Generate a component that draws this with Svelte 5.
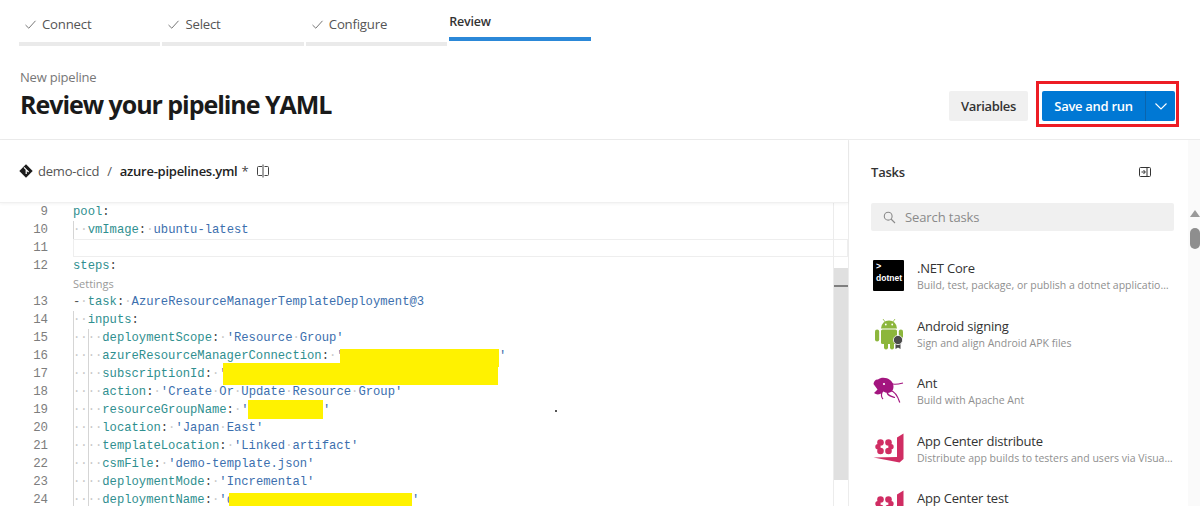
<script>
	const steps = [
		{ label: 'Connect', done: true },
		{ label: 'Select', done: true },
		{ label: 'Configure', done: true },
		{ label: 'Review', done: false }
	];

	// indent = number of visible whitespace dots, k = key, v = value
	const lines = [
		{ n: 9, k: 'pool', colon: ':' },
		{ n: 10, indent: 2, k: 'vmImage', v: 'ubuntu-latest' },
		{ n: 11, current: true },
		{ n: 12, k: 'steps', colon: ':' },
		{ settings: true },
		{ n: 13, dash: true, k: 'task', v: 'AzureResourceManagerTemplateDeployment@3' },
		{ n: 14, indent: 2, k: 'inputs', colon: ':' },
		{ n: 15, indent: 4, k: 'deploymentScope', v: "'Resource Group'" },
		{ n: 16, indent: 4, k: 'azureResourceManagerConnection', v: "'" },
		{ n: 17, indent: 4, k: 'subscriptionId', v: "'" },
		{ n: 18, indent: 4, k: 'action', v: "'Create Or Update Resource Group'" },
		{ n: 19, indent: 4, k: 'resourceGroupName', v: "'" },
		{ n: 20, indent: 4, k: 'location', v: "'Japan East'" },
		{ n: 21, indent: 4, k: 'templateLocation', v: "'Linked artifact'" },
		{ n: 22, indent: 4, k: 'csmFile', v: "'demo-template.json'" },
		{ n: 23, indent: 4, k: 'deploymentMode', v: "'Incremental'" },
		{ n: 24, indent: 4, k: 'deploymentName', v: "'d" }
	];

	const tasks = [
		{ icon: 'dotnet', name: '.NET Core', desc: 'Build, test, package, or publish a dotnet application, or run a custom dotnet command' },
		{ icon: 'android', name: 'Android signing', desc: 'Sign and align Android APK files' },
		{ icon: 'ant', name: 'Ant', desc: 'Build with Apache Ant' },
		{ icon: 'appcenter', name: 'App Center distribute', desc: 'Distribute app builds to testers and users via Visual Studio App Center' },
		{ icon: 'appcenter', name: 'App Center test', desc: 'Test app packages with Visual Studio App Center' }
	];

	const words = (text) => text.split(' ');
</script>

<div class="page">
	<nav class="stepper">
		{#each steps as step}
			<div class="step" class:active={!step.done}>
				<div class="step-label">
					{#if step.done}
						<svg class="check" width="13" height="13" viewBox="0 0 13 13" aria-hidden="true">
							<path d="M1.5 7 L4.8 10.2 L11.5 2.8" fill="none" stroke="#777" stroke-width="1" />
						</svg>
					{/if}
					<span>{step.label}</span>
				</div>
				<div class="step-bar"></div>
			</div>
		{/each}
	</nav>

	<header class="header">
		<div class="titles">
			<div class="crumb">New pipeline</div>
			<h1>Review your pipeline YAML</h1>
		</div>
		<div class="actions">
			<button class="btn-plain">Variables</button>
			<div class="highlight">
				<div class="split">
					<button class="btn-primary">Save and run</button>
					<button class="btn-caret" aria-label="More actions">
						<svg width="14" height="14" viewBox="0 0 14 14" aria-hidden="true">
							<path d="M1.5 4.5 L7 10 L12.5 4.5" fill="none" stroke="#fff" stroke-width="1.1" />
						</svg>
					</button>
				</div>
			</div>
		</div>
	</header>

	<main class="main">
		<section class="editor-pane">
			<div class="file-bar">
				<svg class="repo" width="14" height="14" viewBox="0 0 14 14" aria-hidden="true">
					<path d="M7 0.3 L13.7 7 L7 13.7 L0.3 7 Z" fill="#1b1b1b" />
					<path d="M5 3.4 L7.2 5.6 M7.2 5.6 L7.2 10 M7.2 5.6 L9.6 8" stroke="#fff" stroke-width="1.2" fill="none" />
				</svg>
				<span class="repo-name">demo-cicd</span>
				<span class="slash">/</span>
				<span class="file-name">azure-pipelines.yml</span>
				<span class="star">*</span>
				<svg class="diff" width="14" height="14" viewBox="0 0 14 14" aria-hidden="true">
					<path d="M6 2.5 H2.5 A1 1 0 0 0 1.5 3.5 V10.5 A1 1 0 0 0 2.5 11.5 H6 M8.5 2.5 H11.5 A1 1 0 0 1 12.5 3.5 V10.5 A1 1 0 0 1 11.5 11.5 H8.5 M7 0.5 V13.5" fill="none" stroke="#444" stroke-width="1" />
				</svg>
			</div>

			<div class="editor">
				<div class="code">
					{#each lines as line}
						{#if line.settings}
							<div class="settings-row">Settings</div>
						{:else}
							<div class="row" class:current={line.current}>
								<span class="num">{line.n}</span>
								<span class="text">
									{#if line.indent}
										<span class="guide"></span>
										{#if line.indent > 2}<span class="guide second"></span>{/if}
										<span class="ws">{'·'.repeat(line.indent)}</span>
									{/if}
									{#if line.dash}<span class="dash">-</span><span class="ws">·</span>{/if}
									{#if line.k}<span class="key">{line.k}</span>{/if}
									{#if line.colon}<span class="punct">:</span>{/if}
									{#if line.v}
										<span class="punct">:</span>
										<span class="ws">·</span>
										{#each words(line.v) as word, i}
											{#if i > 0}<span class="ws">·</span>{/if}
											<span class="val">{word}</span>
										{/each}
									{/if}
								</span>
							</div>
						{/if}
					{/each}
				</div>

				<div class="redact r1"></div>
				<div class="quote q1">'</div>
				<div class="redact r2"></div>
				<div class="redact r3"></div>
				<div class="quote q3">'</div>
				<div class="redact r4"></div>
				<div class="quote q4">'</div>
				<div class="speck"></div>

				<div class="minimap-bar">
					<div class="thumb"><div class="mark"></div></div>
				</div>
			</div>
		</section>

		<aside class="tasks">
			<div class="tasks-body">
				<div class="tasks-head">
					<span>Tasks</span>
					<svg width="14" height="14" viewBox="0 0 14 14" aria-hidden="true">
						<rect x="1.5" y="2.5" width="11" height="9" rx="1" fill="none" stroke="#333" stroke-width="1" />
						<path d="M9 2.5 V11.5 M3.5 7 H7 M5.5 5 L7.4 7 L5.5 9" fill="none" stroke="#333" stroke-width="1" />
					</svg>
				</div>
				<div class="search">
					<svg width="13" height="13" viewBox="0 0 13 13" aria-hidden="true">
						<circle cx="5.2" cy="5.2" r="3.9" fill="none" stroke="#8a8a8a" stroke-width="1.1" />
						<path d="M8 8 L12 12" stroke="#8a8a8a" stroke-width="1.1" />
					</svg>
					<span>Search tasks</span>
				</div>
				<ul class="task-list">
					{#each tasks as task}
						<li class="task">
							<div class="task-icon">
								{#if task.icon === 'dotnet'}
									<div class="dotnet"><span class="prompt">&gt;</span><span class="word">dotnet</span></div>
								{:else if task.icon === 'android'}
									<svg width="32" height="32" viewBox="0 0 32 32" aria-hidden="true">
										<path d="M8 10.5 A8 8 0 0 1 24 10.5 Z" fill="#8cb63c" />
										<path d="M10 1 L12.5 4.5 M22 1 L19.5 4.5" stroke="#8cb63c" stroke-width="0.8" />
										<circle cx="12.8" cy="6.5" r="0.9" fill="#fff" />
										<circle cx="19.2" cy="6.5" r="0.9" fill="#fff" />
										<rect x="8" y="11.5" width="16" height="14.5" rx="1.5" fill="#8cb63c" />
										<rect x="2" y="11.5" width="4.2" height="12" rx="2.1" fill="#8cb63c" />
										<rect x="25.8" y="11.5" width="4.2" height="9" rx="2.1" fill="#8cb63c" />
										<rect x="11" y="24" width="4" height="7.5" rx="2" fill="#8cb63c" />
										<rect x="17" y="24" width="4" height="7.5" rx="2" fill="#8cb63c" />
										<path d="M22.5 25 V31 L25 29.4 L27.5 31 V25 Z" fill="#4a4a4a" />
										<circle cx="25" cy="22" r="4.6" fill="#4a4a4a" stroke="#fff" stroke-width="0.8" />
									</svg>
								{:else if task.icon === 'ant'}
									<svg width="32" height="32" viewBox="0 0 32 32" aria-hidden="true">
										<path d="M0.5 9 C1 5.5 3 4 5 4.5 C8 2 14 2.5 17 5 C20.5 7.5 21.5 12 19.5 15.5 C17.5 18.5 13 18.5 10.5 16.5 C7.5 19.5 4 20.5 1 18 L4.5 14.5 Z" fill="#a3157f" />
										<circle cx="11" cy="9" r="1.1" fill="#fff" />
										<path d="M18 8.5 C21 10 26 9 30 8 M17 15.5 C21 16 24 19 26.8 27.5 M14 17.5 C15 21 18 21.5 22 22.5 M9 17 C8 20 8 22 10 24" fill="none" stroke="#a3157f" stroke-width="1.2" />
									</svg>
								{:else}
									<svg width="32" height="32" viewBox="0 0 32 32" aria-hidden="true">
										<path d="M24 4.5 L30.5 0.5 V26 L26.5 29.5 L0.5 24.5 L24 24 Z" fill="#d02d63" />
										<circle cx="7.5" cy="9.5" r="3.3" fill="#d02d63" />
										<circle cx="15.5" cy="9.5" r="3.3" fill="#d02d63" />
										<circle cx="7.5" cy="18" r="3.3" fill="#d02d63" />
										<circle cx="15.5" cy="18" r="3.3" fill="#d02d63" />
										<circle cx="5" cy="13.8" r="2.7" fill="#d02d63" />
										<circle cx="18" cy="13.8" r="2.7" fill="#d02d63" />
										<circle cx="11.5" cy="13.8" r="1.8" fill="#fff" />
									</svg>
								{/if}
							</div>
							<div class="task-text">
								<div class="task-name">{task.name}</div>
								<div class="task-desc">{task.desc}</div>
							</div>
						</li>
					{/each}
				</ul>
			</div>
			<div class="tasks-scroll">
				<div class="arrow"></div>
				<div class="knob"></div>
			</div>
		</aside>
	</main>
</div>

<style>
	:global(body) {
		margin: 0;
		background: #fff;
		overflow: hidden;
	}

	.page {
		width: 1200px;
		height: 506px;
		overflow: hidden;
		display: flex;
		flex-direction: column;
		font-family: 'Open Sans', 'Noto Sans', sans-serif;
		color: #333;
	}

	button {
		font: inherit;
		border: none;
		cursor: pointer;
	}

	/* Stepper */
	.stepper {
		display: flex;
		gap: 2px;
		padding: 0 0 0 19px;
		height: 46px;
		flex: none;
	}

	.step {
		width: 141.4px;
		display: flex;
		flex-direction: column;
		justify-content: flex-end;
	}

	.step-label {
		display: flex;
		align-items: center;
		gap: 5px;
		padding-left: 5px;
		height: 20px;
		margin-bottom: 8px;
		font-size: 13.2px;
		color: #555;
		letter-spacing: -0.2px;
	}

	.step-bar {
		height: 4px;
		background: #eaeaea;
	}

	.step.active .step-label {
		padding-left: 0;
		margin-bottom: 6px;
		color: #333;
		font-weight: 600;
		font-size: 12.5px;
	}

	.step.active {
		justify-content: flex-start;
		padding-top: 11px;
	}

	.step.active .step-bar {
		background: #2b88d8;
	}

	/* Header */
	.header {
		flex: none;
		height: 94px;
		border-bottom: 1px solid #ececec;
		display: flex;
		justify-content: space-between;
		padding: 0 21px 0 20px;
		box-sizing: border-box;
	}

	.crumb {
		margin-top: 22px;
		font-size: 13px;
		line-height: 18px;
		color: #777;
		letter-spacing: -0.2px;
	}

	h1 {
		margin: 1px 0 0;
		font-size: 25px;
		line-height: 34px;
		font-weight: 700;
		color: #1a1a1a;
		letter-spacing: -1.04px;
	}

	.actions {
		display: flex;
		align-items: flex-start;
		margin-top: 35px;
		gap: 8px;
	}

	.btn-plain {
		margin-top: 10px;
		width: 79px;
		height: 30px;
		background: #f0f0f0;
		border-radius: 2px;
		color: #333;
		font-size: 13px;
		font-weight: 600;
		padding: 0;
		letter-spacing: -0.35px;
	}

	.highlight {
		border: 3px solid #ed1c24;
		padding: 7px 1px 3px 3px;
		width: 143px;
		height: 46px;
		box-sizing: border-box;
	}

	.split {
		display: flex;
		height: 30px;
		width: 133px;
	}

	.btn-primary {
		width: 103px;
		background: #0078d4;
		color: #fff;
		font-size: 13px;
		font-weight: 600;
		border-radius: 2px 0 0 2px;
		padding: 0;
		letter-spacing: -0.3px;
	}

	.btn-caret {
		width: 30px;
		background: #0078d4;
		border-left: 1px solid #0a64ad;
		border-radius: 0 2px 2px 0;
		padding: 0;
		display: flex;
		align-items: center;
		justify-content: center;
	}

	/* Editor column */
	.main {
		flex: 1;
		display: flex;
		min-height: 0;
	}

	.editor-pane {
		width: 848px;
		border-right: 1px solid #ececec;
		display: flex;
		flex-direction: column;
		min-height: 0;
	}

	.file-bar {
		flex: none;
		height: 63px;
		box-sizing: border-box;
		display: flex;
		align-items: center;
		padding-left: 19px;
		font-size: 13px;
		letter-spacing: -0.2px;
		border-bottom: 1px solid #f0f0f0;
		box-shadow: 0 1px 3px rgba(0, 0, 0, 0.05);
		position: relative;
		z-index: 1;
	}

	.repo-name {
		margin-left: 5px;
		color: #555;
	}

	.slash {
		margin: 0 8px;
		color: #555;
	}

	.file-name {
		color: #222;
		font-weight: 600;
		letter-spacing: -0.25px;
	}

	.star {
		margin-left: 4px;
		color: #444;
	}

	.diff {
		margin-left: 8px;
	}

	.editor {
		flex: 1;
		position: relative;
		overflow: hidden;
	}

	.code {
		font-family: 'Liberation Mono', 'DejaVu Sans Mono', monospace;
		font-size: 12.2px;
	}

	.row {
		display: flex;
		height: 18px;
		line-height: 18px;
		white-space: pre;
	}

	.row.current .text {
		box-shadow: inset 0 0 0 1px #eeeeee;
		height: 18px;
	}

	.num {
		width: 48px;
		text-align: right;
		color: #7d7d7d;
		flex: none;
		font-size: 12.4px;
	}

	/* flex drops the whitespace between the token spans */
	.text {
		flex: 1;
		margin-left: 25px;
		position: relative;
		display: flex;
	}

	.guide {
		position: absolute;
		left: 0;
		top: 0;
		bottom: 0;
		width: 1px;
		background: #d5d5d5;
	}

	.guide.second {
		left: 14.6px;
	}

	.settings-row {
		height: 18px;
		line-height: 18px;
		margin-left: 73px;
		font-family: 'Open Sans', sans-serif;
		font-size: 11px;
		color: #9a9a9a;
	}

	.key {
		color: #2f8f8f;
	}

	.val {
		color: #3c6fae;
	}

	.punct {
		color: #444;
	}

	.dash {
		color: #555;
	}

	.ws {
		color: #c8c8c8;
	}

	/* Redacted strips on top of the code */
	.redact {
		position: absolute;
		background: #fff200;
	}

	.r1 {
		left: 340px;
		top: 146px;
		width: 159px;
		height: 18px;
	}

	.r2 {
		left: 223px;
		top: 160px;
		width: 275px;
		height: 22px;
	}

	.r3 {
		left: 248px;
		top: 197px;
		width: 75px;
		height: 19px;
	}

	.r4 {
		left: 229px;
		top: 290px;
		width: 183px;
		height: 16px;
	}

	.quote {
		position: absolute;
		font-family: 'Liberation Mono', monospace;
		font-size: 12.2px;
		color: #3c6fae;
		line-height: 18px;
	}

	.q1 {
		left: 499px;
		top: 144px;
	}

	.q3 {
		left: 323px;
		top: 198px;
	}

	.q4 {
		left: 412px;
		top: 288px;
	}

	.speck {
		position: absolute;
		left: 555px;
		top: 207px;
		width: 2px;
		height: 2px;
		background: #555;
	}

	.minimap-bar {
		position: absolute;
		right: 0;
		top: 0;
		bottom: 0;
		width: 14px;
		border-left: 1px solid #ececec;
	}

	.thumb {
		position: absolute;
		left: 0;
		right: 0;
		top: 65px;
		height: 212px;
		background: #e0e0e0;
	}

	.mark {
		margin-top: 17px;
		height: 2px;
		background: #7f7f7f;
	}

	/* Tasks panel */
	.tasks {
		flex: 1;
		display: flex;
		min-width: 0;
	}

	.tasks-body {
		width: 339px;
		flex: none;
		box-sizing: border-box;
		padding-left: 22px;
	}

	.tasks-head {
		height: 63px;
		display: flex;
		align-items: center;
		justify-content: space-between;
		padding-right: 36px;
		box-sizing: border-box;
		font-size: 13px;
		font-weight: 600;
		color: #333;
		letter-spacing: -0.2px;
	}

	.search {
		width: 303px;
		height: 28px;
		background: #f0f0f0;
		border-radius: 2px;
		display: flex;
		align-items: center;
		gap: 9px;
		padding-left: 12px;
		box-sizing: border-box;
		font-size: 13px;
		color: #8a8a8a;
		letter-spacing: -0.1px;
	}

	.task-list {
		list-style: none;
		margin: 0;
		padding: 0;
		margin-top: 29px;
	}

	.task {
		display: flex;
		height: 57.5px;
		gap: 12px;
	}

	.task-icon {
		width: 32px;
		height: 32px;
		margin-left: 2px;
		flex: none;
	}

	.task-text {
		min-width: 0;
		width: 258px;
	}

	.task-name {
		font-size: 13px;
		line-height: 18px;
		color: #333;
		margin-top: -1px;
		letter-spacing: -0.2px;
	}

	.task-desc {
		font-size: 10.5px;
		line-height: 16px;
		color: #8f8f8f;
		white-space: nowrap;
		overflow: hidden;
		text-overflow: ellipsis;
	}

	.dotnet {
		width: 31px;
		height: 31px;
		background: #000;
		border-radius: 1px;
		color: #fff;
		display: flex;
		flex-direction: column;
		font-family: 'Liberation Sans', sans-serif;
		font-weight: 700;
		padding: 0 0 0 3px;
		box-sizing: border-box;
		line-height: 1;
	}

	.prompt {
		font-size: 9px;
		margin-top: 2px;
		font-weight: 700;
	}

	.word {
		font-size: 8.5px;
		margin-top: 3px;
	}

	.tasks-scroll {
		flex: 1;
		box-sizing: border-box;
		padding: 70px 0 0 2px;
		background: #fafafa;
	}

	.arrow {
		width: 0;
		height: 0;
		margin: 0 auto;
		border-left: 5px solid transparent;
		border-right: 5px solid transparent;
		border-bottom: 7px solid #9a9a9a;
	}

	.knob {
		width: 10px;
		height: 21px;
		margin: 11px auto 0;
		border-radius: 5px;
		background: #8e8e8e;
	}
</style>
